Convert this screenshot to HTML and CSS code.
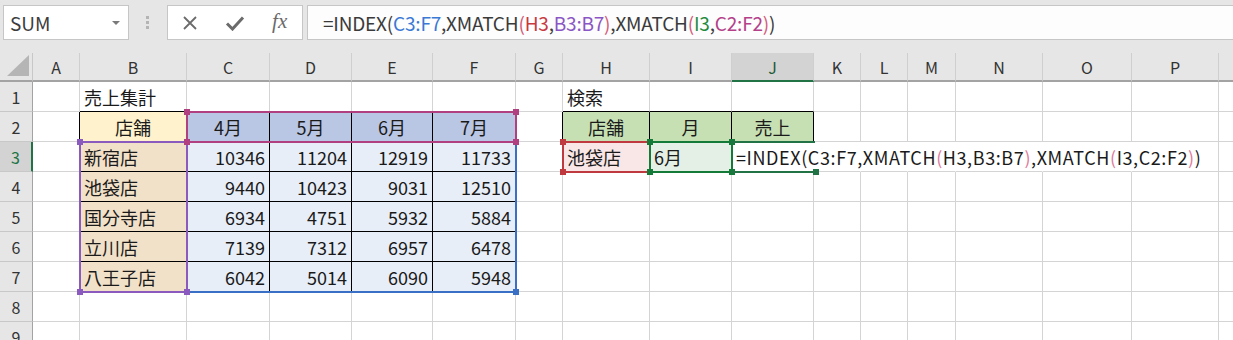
FILE: index.html
```html
<!DOCTYPE html>
<html>

<head>
  <meta charset="utf-8">
  <link rel="stylesheet" href="styles.css">
</head>

<body>
  <div class="toolbar">
    <div class="namebox">
      <span>SUM</span>
      <i class="caret"></i>
    </div>
    <div class="grip">
      <svg width="4" height="14" viewBox="0 0 4 14">
        <rect x="0" y="0" width="3" height="3" fill="#b4b4b4" />
        <rect x="0" y="5" width="3" height="3" fill="#b4b4b4" />
        <rect x="0" y="10" width="3" height="3" fill="#b4b4b4" />
      </svg>
    </div>
    <div class="fxbox">
      <span class="btn">
        <svg width="16" height="16" viewBox="0 0 16 16">
          <path d="M2 2 L14 14 M14 2 L2 14" stroke="#6b6b6b" stroke-width="1.8" fill="none" />
        </svg>
      </span>
      <span class="btn">
        <svg width="20" height="16" viewBox="0 0 20 16">
          <path d="M2 8.5 L7.5 14 L18 2.5" stroke="#6b6b6b" stroke-width="3" fill="none" />
        </svg>
      </span>
      <span class="btn fx">fx</span>
    </div>
    <div class="formula">
      <span class="ftext">=INDEX(<span class="ref-b">C3:F7</span>,XMATCH<span class="par">(</span><span class="ref-r">H3</span>,<span class="ref-p">B3:B7</span><span class="par">)</span>,XMATCH<span class="par">(</span><span class="ref-g">I3</span>,<span class="ref-m">C2:F2</span><span class="par">)</span>)</span>
    </div>
  </div>

  <div class="sheet">
    <!-- column headers -->
    <div class="corner"><i></i></div>
    <div class="ch">A</div><div class="ch">B</div><div class="ch">C</div><div class="ch">D</div>
    <div class="ch">E</div><div class="ch">F</div><div class="ch">G</div><div class="ch">H</div>
    <div class="ch">I</div><div class="ch sel">J</div><div class="ch">K</div><div class="ch">L</div>
    <div class="ch">M</div><div class="ch">N</div><div class="ch">O</div><div class="ch">P</div>
    <div class="ch"></div>

    <!-- row 1 -->
    <div class="rh">1</div>
    <div class="c"></div>
    <div class="c bb">売上集計</div>
    <div class="c bb"></div><div class="c bb"></div><div class="c bb"></div><div class="c bb"></div>
    <div class="c"></div>
    <div class="c bb">検索</div>
    <div class="c bb"></div><div class="c bb"></div>
    <div class="c"></div><div class="c"></div><div class="c"></div><div class="c"></div>
    <div class="c"></div><div class="c"></div><div class="c"></div>

    <!-- row 2 -->
    <div class="rh">2</div>
    <div class="c br"></div>
    <div class="c bk ctr head-y">店舗</div>
    <div class="c bk ctr head-b">4月</div>
    <div class="c bk ctr head-b">5月</div>
    <div class="c bk ctr head-b">6月</div>
    <div class="c bk ctr head-b">7月</div>
    <div class="c br"></div>
    <div class="c bk ctr head-g">店舗</div>
    <div class="c bk ctr head-g">月</div>
    <div class="c bk ctr head-g">売上</div>
    <div class="c"></div><div class="c"></div><div class="c"></div><div class="c"></div>
    <div class="c"></div><div class="c"></div><div class="c"></div>

    <!-- row 3 -->
    <div class="rh sel">3</div>
    <div class="c br"></div>
    <div class="c bk store">新宿店</div>
    <div class="c bk num data">10346</div>
    <div class="c bk num data">11204</div>
    <div class="c bk num data">12919</div>
    <div class="c bk num data">11733</div>
    <div class="c"></div>
    <div class="c tint-r">池袋店</div>
    <div class="c tint-g">6月</div>
    <div class="c ov edit">=INDEX(C3:F7,XMATCH<span class="par">(</span>H3,B3:B7<span class="par">)</span>,XMATCH<span class="par">(</span>I3,C2:F2<span class="par">)</span>)</div>
    <div class="c ov"></div><div class="c ov"></div><div class="c ov"></div><div class="c ov"></div>
    <div class="c ov"></div><div class="c"></div><div class="c"></div>

    <!-- row 4 -->
    <div class="rh">4</div>
    <div class="c br"></div>
    <div class="c bk store">池袋店</div>
    <div class="c bk num data">9440</div>
    <div class="c bk num data">10423</div>
    <div class="c bk num data">9031</div>
    <div class="c bk num data">12510</div>
    <div class="c"></div><div class="c"></div><div class="c"></div><div class="c"></div>
    <div class="c"></div><div class="c"></div><div class="c"></div><div class="c"></div>
    <div class="c"></div><div class="c"></div><div class="c"></div>

    <!-- row 5 -->
    <div class="rh">5</div>
    <div class="c br"></div>
    <div class="c bk store">国分寺店</div>
    <div class="c bk num data">6934</div>
    <div class="c bk num data">4751</div>
    <div class="c bk num data">5932</div>
    <div class="c bk num data">5884</div>
    <div class="c"></div><div class="c"></div><div class="c"></div><div class="c"></div>
    <div class="c"></div><div class="c"></div><div class="c"></div><div class="c"></div>
    <div class="c"></div><div class="c"></div><div class="c"></div>

    <!-- row 6 -->
    <div class="rh">6</div>
    <div class="c br"></div>
    <div class="c bk store">立川店</div>
    <div class="c bk num data">7139</div>
    <div class="c bk num data">7312</div>
    <div class="c bk num data">6957</div>
    <div class="c bk num data">6478</div>
    <div class="c"></div><div class="c"></div><div class="c"></div><div class="c"></div>
    <div class="c"></div><div class="c"></div><div class="c"></div><div class="c"></div>
    <div class="c"></div><div class="c"></div><div class="c"></div>

    <!-- row 7 -->
    <div class="rh">7</div>
    <div class="c br"></div>
    <div class="c bk store">八王子店</div>
    <div class="c bk num data">6042</div>
    <div class="c bk num data">5014</div>
    <div class="c bk num data">6090</div>
    <div class="c bk num data">5948</div>
    <div class="c"></div><div class="c"></div><div class="c"></div><div class="c"></div>
    <div class="c"></div><div class="c"></div><div class="c"></div><div class="c"></div>
    <div class="c"></div><div class="c"></div><div class="c"></div>

    <!-- row 8 -->
    <div class="rh">8</div>
    <div class="c"></div><div class="c"></div><div class="c"></div><div class="c"></div>
    <div class="c"></div><div class="c"></div><div class="c"></div><div class="c"></div>
    <div class="c"></div><div class="c"></div><div class="c"></div><div class="c"></div>
    <div class="c"></div><div class="c"></div><div class="c"></div><div class="c"></div>
    <div class="c"></div>

    <!-- row 9 -->
    <div class="rh">9</div>
    <div class="c"></div><div class="c"></div><div class="c"></div><div class="c"></div>
    <div class="c"></div><div class="c"></div><div class="c"></div><div class="c"></div>
    <div class="c"></div><div class="c"></div><div class="c"></div><div class="c"></div>
    <div class="c"></div><div class="c"></div><div class="c"></div><div class="c"></div>
    <div class="c"></div>

    <!-- formula reference highlights -->
    <div class="hl hl-blue"><i class="tl"></i><i class="tr"></i><i class="bl"></i><i class="br"></i></div>
    <div class="hl hl-purple"><i class="tl"></i><i class="tr"></i><i class="bl"></i><i class="br"></i></div>
    <div class="hl hl-magenta"><i class="tl"></i><i class="tr"></i><i class="bl"></i><i class="br"></i></div>
    <div class="hl hl-red"><i class="tl"></i><i class="tr"></i><i class="bl"></i><i class="br"></i></div>
    <div class="hl hl-green"><i class="tl"></i><i class="tr"></i><i class="bl"></i><i class="br"></i></div>
    <div class="hl hl-active"><i class="br"></i></div>
  </div>
</body>

</html>
```

FILE: styles.css
```css
html,
body {
  margin: 0;
  overflow: hidden;
  background: #fff;
  font-family: 'Noto Sans CJK JP', 'Noto Sans', sans-serif;
}

/* formula bar */

.toolbar {
  display: flex;
  height: 53px;
  box-sizing: border-box;
  padding: 5px 0 13px 3px;
  background: #e6e6e6;
}

.namebox {
  width: 126px;
  box-sizing: border-box;
  display: flex;
  align-items: center;
  justify-content: space-between;
  padding: 0 8px 0 6px;
  border: 1px solid #c6c6c6;
  background: #fff;
  font-size: 19px;
  color: #3c3c3c;
}

.caret {
  width: 0;
  height: 0;
  border-left: 4px solid transparent;
  border-right: 4px solid transparent;
  border-top: 4px solid #7a7a7a;
}

.grip {
  width: 38px;
  display: flex;
  align-items: center;
  justify-content: center;
}

.fxbox {
  width: 136px;
  box-sizing: border-box;
  display: flex;
  border: 1px solid #c6c6c6;
  background: #fff;
  margin-right: 4px;
}

.fxbox .btn {
  flex: 1;
  display: flex;
  align-items: center;
  justify-content: center;
}

.fxbox .fx {
  font-family: 'Liberation Serif', serif;
  font-style: italic;
  font-size: 21px;
  color: #6b6b6b;
  padding-bottom: 3px;
}

.formula {
  flex: 1;
  display: flex;
  align-items: center;
  padding-left: 15px;
  border: 1px solid #c6c6c6;
  border-right: none;
  background: #fdfdfd;
  font-size: 19px;
  color: #3a3a3a;
  white-space: nowrap;
}

.ftext {
  letter-spacing: -0.2px;
}

.ref-b { color: #3a78d6; }
.ref-r { color: #c8383f; }
.ref-p { color: #8a55c4; }
.ref-g { color: #1e8a3c; }
.ref-m { color: #b4408a; }
.par { color: #d65a78; }

/* sheet grid */

.sheet {
  position: relative;
  display: grid;
  grid-template-columns: 33px 47px 107px 83px 82px 81px 83px 47px 87px 82px 82px 47px 47px 48px 87px 89px 87px 87px;
  grid-template-rows: 29px repeat(9, 30px);
  overflow: hidden;
  font-size: 18px;
  color: #1a1a1a;
}

.corner,
.ch,
.rh {
  background: #e6e6e6;
  box-sizing: border-box;
  display: flex;
  align-items: center;
  justify-content: center;
  font-size: 16px;
  color: #333;
}

.corner {
  align-items: flex-end;
  justify-content: flex-end;
  padding: 0 3px 4px 0;
  border-right: 1px solid #c8c8c8;
  border-bottom: 2px solid #a3a3a3;
}

.corner i {
  width: 22px;
  height: 21px;
  background: #b5b5b5;
  clip-path: polygon(100% 0, 100% 100%, 0 100%);
}

.ch {
  border-right: 1px solid #cfcfcf;
  border-bottom: 2px solid #a3a3a3;
}

.ch.sel {
  background: #d3d3d3;
  border-bottom-color: #217346;
  color: #1e5a34;
}

.rh {
  border-right: 1px solid #a3a3a3;
  border-bottom: 1px solid #c8c8c8;
}

.rh.sel {
  background: #d3d3d3;
  border-right: 2px solid #217346;
  color: #217346;
}

.c {
  box-sizing: border-box;
  display: flex;
  align-items: center;
  padding: 0 4px;
  white-space: nowrap;
  border-right: 1px solid #d4d4d4;
  border-bottom: 1px solid #d4d4d4;
}

.c.bb { border-bottom-color: #000; }
.c.br { border-right-color: #000; }
.c.bk { border-right-color: #000; border-bottom-color: #000; }
.c.ov { border-right-color: transparent; }

.c.ctr { justify-content: center; }
.c.num { justify-content: flex-end; }

.head-y { background: #fff2cc; }
.head-b { background: #b9c6e4; }
.head-g { background: #c6e0b4; }
.store { background: #f2e1c9; }
.data { background: #e8eef8; }
.tint-r { background: #f9e6e6; }
.tint-g { background: #e4f0e6; }

.edit {
  overflow: visible;
  z-index: 1;
  letter-spacing: 0.6px;
}

.edit .par { color: #e07a9a; }

/* reference highlights drawn over the grid */

.hl {
  position: absolute;
  inset: -1px;
  border: 2px solid;
  pointer-events: none;
}

.hl i {
  position: absolute;
  width: 6px;
  height: 6px;
  background: currentColor;
}

.hl .tl { top: -4px; left: -4px; }
.hl .tr { top: -4px; right: -4px; }
.hl .bl { bottom: -4px; left: -4px; }
.hl .br { bottom: -4px; right: -4px; }

.hl-blue {
  grid-column: 4 / 8;
  grid-row: 4 / 9;
  color: #3a6fc6;
  z-index: 2;
}

.hl-purple {
  grid-column: 3 / 4;
  grid-row: 4 / 9;
  color: #8a5abf;
  z-index: 3;
}

.hl-magenta {
  grid-column: 4 / 8;
  grid-row: 3 / 4;
  color: #b0407f;
  z-index: 4;
}

.hl-red {
  grid-column: 9 / 10;
  grid-row: 4 / 5;
  color: #c0393e;
  z-index: 2;
}

.hl-green {
  grid-column: 10 / 11;
  grid-row: 4 / 5;
  color: #137a37;
  z-index: 3;
}

.hl-active {
  grid-column: 11 / 12;
  grid-row: 4 / 5;
  color: #217346;
  border-left: none;
  border-right: none;
  z-index: 3;
}
```
